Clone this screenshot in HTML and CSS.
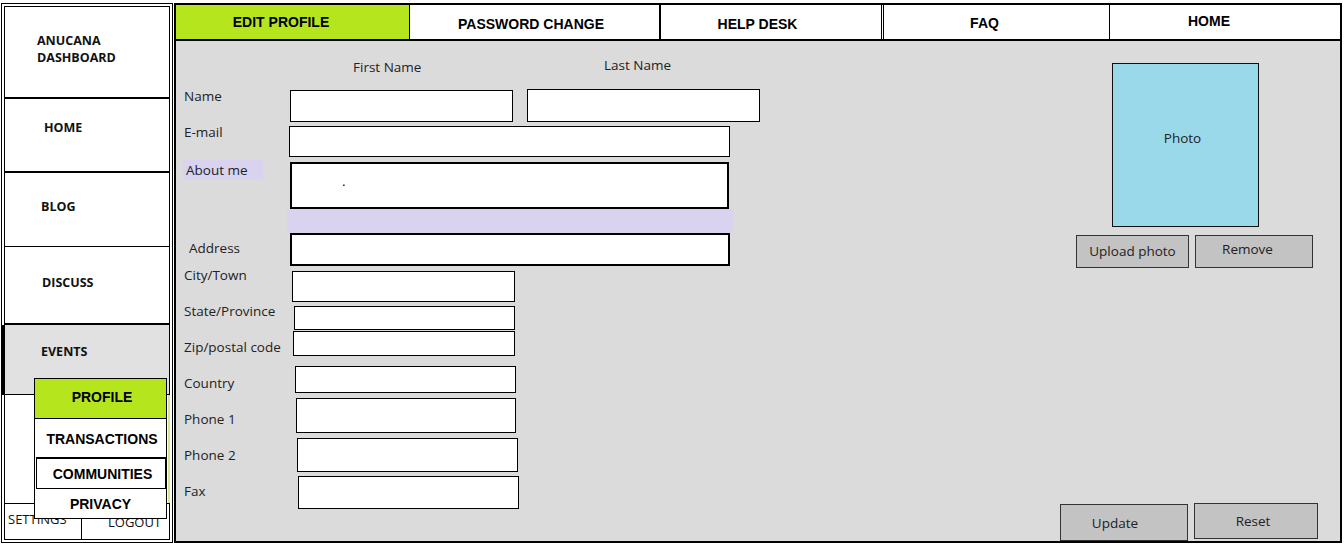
FILE: index.html
```html
<!DOCTYPE html>
<html lang="en">
<head>
<meta charset="utf-8">
<title>Anucana Dashboard - Edit Profile</title>
<link rel="stylesheet" href="styles.css">
</head>
<body>
<div class="page">
  <aside class="sidebar">
    <div class="si si-brand">ANUCANA<br>DASHBOARD</div>
    <div class="si si-home">HOME</div>
    <div class="si si-blog">BLOG</div>
    <div class="si si-discuss">DISCUSS</div>
    <div class="si si-events">EVENTS</div>
    <div class="si-blank"></div>
    <div class="si-foot">
      <div class="si-settings">SETTINGS</div>
      <div class="si-logout">LOGOUT</div>
    </div>
    <div class="popup">
      <div class="pop pop-profile">PROFILE</div>
      <div class="pop pop-trans">TRANSACTIONS</div>
      <div class="pop pop-comm">COMMUNITIES</div>
      <div class="pop pop-privacy">PRIVACY</div>
    </div>
  </aside>
  <main class="main">
    <nav class="tabs">
      <div class="tab tab--edit">EDIT PROFILE</div>
      <div class="tab tab--pass">PASSWORD CHANGE</div>
      <div class="tab tab--help">HELP DESK</div>
      <div class="tab tab--faq">FAQ</div>
      <div class="tab tab--home">HOME</div>
    </nav>
    <section class="content">
      <div class="form">
        <div class="form-head">
          <div class="head-first">First Name</div>
          <div class="head-last">Last Name</div>
        </div>
        <div class="form-body">
          <div class="labels">
            <div class="lbl lbl--name">Name</div>
            <div class="lbl">E-mail</div>
            <div class="lbl lbl--about">About me</div>
            <div class="lbl lbl--address">Address</div>
            <div class="lbl lbl--city">City/Town</div>
            <div class="lbl">State/Province</div>
            <div class="lbl">Zip/postal code</div>
            <div class="lbl">Country</div>
            <div class="lbl">Phone 1</div>
            <div class="lbl">Phone 2</div>
            <div class="lbl">Fax</div>
          </div>
          <div class="fields">
            <div class="name-row">
              <div class="field f-first"></div>
              <div class="field f-last"></div>
            </div>
            <div class="field f-email"></div>
            <div class="field f-about">.</div>
            <div class="f-band"></div>
            <div class="field f-address"></div>
            <div class="field f-city"></div>
            <div class="field f-state"></div>
            <div class="field f-zip"></div>
            <div class="field f-country"></div>
            <div class="field f-phone1"></div>
            <div class="field f-phone2"></div>
            <div class="field f-fax"></div>
          </div>
        </div>
      </div>
      <div class="side">
        <div class="photo">Photo</div>
        <div class="photo-actions">
          <div class="btn btn-upload">Upload photo</div>
          <div class="btn btn-remove">Remove</div>
        </div>
        <div class="form-actions">
          <div class="btn btn-update">Update</div>
          <div class="btn btn-reset">Reset</div>
        </div>
      </div>
    </section>
  </main>
</div>
</body>
</html>
```

FILE: styles.css
```css
* { box-sizing: border-box; }
html, body { margin: 0; }
body {
  width: 1344px;
  height: 545px;
  overflow: hidden;
  background: #fff;
  font-family: "Open Sans", "Noto Sans", sans-serif;
  color: #222;
}
.page {
  display: flex;
  gap: 1px;
  padding: 3px 0 0 1px;
}

/* ---------- Sidebar ---------- */
.sidebar {
  position: relative;
  width: 172px;
  height: 540px;
  border: 4px double #000;
  display: flex;
  flex-direction: column;
}
.si {
  font-weight: 700;
  font-size: 12.5px;
  line-height: 20px;
  color: #111;
}
.si-brand {
  height: 92px;
  border-bottom: 2px solid #000;
  padding: 25px 0 0 32px;
  line-height: 17px;
}
.si-home {
  height: 74px;
  border-bottom: 2px solid #000;
  padding: 19px 0 0 39px;
}
.si-blog {
  height: 74px;
  border-bottom: 1px solid #000;
  padding: 24px 0 0 36px;
}
.si-discuss {
  height: 78px;
  border-bottom: 2px solid #000;
  padding: 26px 0 0 37px;
}
.si-events {
  height: 70px;
  border-bottom: 1px solid #000;
  background: #e1e1e1;
  padding: 17px 0 0 36px;
  box-shadow: -4px 0 0 #000;
}
.si-blank { flex: 1; }
.si-foot {
  height: 36px;
  border-top: 1px solid #000;
  display: flex;
  font-size: 13px;
  line-height: 20px;
  color: #111;
}
.si-settings {
  width: 77px;
  border-right: 1px solid #000;
  padding: 5px 0 0 3px;
}
.si-logout {
  flex: 1;
  padding: 8px 0 0 26px;
}

/* popup menu over the sidebar */
.popup {
  position: absolute;
  left: 29px;
  top: 371px;
  width: 133px;
  border: 1px solid #000;
  background: #fff;
  font-family: "Liberation Sans", Arial, sans-serif;
  font-weight: 700;
  font-size: 14px;
  color: #000;
}
.popup::after {
  content: "";
  position: absolute;
  right: -4px;
  top: 16px;
  width: 2px;
  height: 108px;
  background: #d3e78f;
}
.pop {
  display: flex;
  align-items: center;
  justify-content: center;
  padding-left: 3px;
}
.pop-profile {
  height: 40px;
  background: #b5e61d;
  border-bottom: 1px solid #000;
  padding-bottom: 4px;
}
.pop-trans {
  height: 38px;
  padding-top: 2px;
}
.pop-comm {
  height: 32px;
  margin-left: 1px;
  border: 1px solid #000;
  border-top-width: 2px;
}
.pop-privacy {
  height: 29px;
  padding-left: 0;
}

/* ---------- Main ---------- */
.main {
  width: 1168px;
  height: 540px;
  border: 2px solid #000;
  display: flex;
  flex-direction: column;
}
.tabs {
  display: flex;
  height: 36px;
  border-bottom: 2px solid #000;
}
.tab {
  display: flex;
  align-items: center;
  justify-content: center;
  background: #fff;
  font-family: "Liberation Sans", Arial, sans-serif;
  font-weight: 700;
  font-size: 14px;
  color: #000;
}
.tab--edit {
  width: 234px;
  background: #b5e61d;
  border-right: 1px solid #000;
  padding: 0 23px 1px 0;
}
.tab--pass {
  width: 251px;
  border-right: 2px solid #000;
  padding: 3px 7px 0 0;
}
.tab--help {
  width: 223px;
  border-right: 3px double #000;
  padding: 3px 27px 0 0;
}
.tab--faq {
  width: 226px;
  border-right: 1px solid #000;
  padding: 1px 24px 0 0;
}
.tab--home {
  flex: 1;
  padding: 0 32px 3px 0;
}

.content {
  flex: 1;
  display: flex;
  background: #dbdbdb;
}
.form {
  flex: 1;
  padding-left: 8px;
  font-size: 13.5px;
  line-height: 20px;
  color: #222;
}
.form-head {
  display: flex;
  height: 36px;
  padding-top: 14px;
}
.head-first {
  width: 251px;
  margin: 2px 0 0 169px;
}
.form-body { display: flex; }
.labels {
  width: 103px;
  display: flex;
  flex-direction: column;
}
.lbl {
  height: 20px;
  margin-top: 16px;
  white-space: nowrap;
}
.lbl--name { margin-top: 9px; }
.lbl--about {
  margin-top: 18px;
  margin-left: -1px;
  width: 80px;
  padding-left: 3px;
  background: #d9d3ef;
}
.lbl--address { margin-top: 58px; padding-left: 5px; }
.lbl--city { margin-top: 7px; }

.fields {
  display: flex;
  flex-direction: column;
  align-items: flex-start;
}
.field {
  background: #fff;
  border: 1px solid #000;
}
.name-row { display: flex; align-items: flex-start; }
.f-first { margin: 13px 0 0 3px; width: 223px; height: 32px; }
.f-last { margin: 12px 0 0 14px; width: 233px; height: 33px; }
.f-email { margin: 4px 0 0 2px; width: 441px; height: 31px; }
.f-about {
  margin: 5px 0 0 3px;
  width: 439px;
  height: 47px;
  border-width: 2px;
  padding: 7px 0 0 50px;
  color: #000;
}
.f-band {
  width: 447px;
  height: 24px;
  background: #d9d3ef;
  border-radius: 0 2px 6px 0;
}
.f-address { margin-left: 3px; width: 440px; height: 33px; border-width: 2px; }
.f-city { margin: 5px 0 0 5px; width: 223px; height: 31px; }
.f-state { margin: 4px 0 0 7px; width: 221px; height: 24px; }
.f-zip { margin: 1px 0 0 6px; width: 222px; height: 25px; }
.f-country { margin: 10px 0 0 8px; width: 221px; height: 27px; }
.f-phone1 { margin: 5px 0 0 9px; width: 220px; height: 35px; }
.f-phone2 { margin: 5px 0 0 10px; width: 221px; height: 34px; }
.f-fax { margin: 4px 0 0 11px; width: 221px; height: 33px; }

/* ---------- Photo side ---------- */
.side {
  width: 258px;
  margin-right: 22px;
  display: flex;
  flex-direction: column;
  font-size: 13.5px;
  line-height: 20px;
  color: #222;
}
.photo {
  margin: 22px 0 0 52px;
  width: 147px;
  height: 164px;
  background: #99d9ea;
  border: 1px solid #111;
  display: flex;
  align-items: center;
  justify-content: center;
  padding: 0 6px 14px 0;
}
.photo-actions {
  display: flex;
  gap: 6px;
  margin: 8px 0 0 16px;
}
.btn {
  background: #c3c3c3;
  border: 1px solid #333;
  display: flex;
  align-items: center;
  justify-content: center;
}
.btn-upload { width: 113px; height: 33px; padding-bottom: 2px; }
.btn-remove { width: 118px; height: 33px; padding: 0 13px 6px 0; }
.form-actions {
  margin-top: auto;
  display: flex;
  align-items: flex-start;
  gap: 6px;
}
.btn-update { width: 128px; height: 37px; margin-top: 1px; padding-right: 18px; }
.btn-reset { width: 124px; height: 36px; padding: 0 6px 1px 0; }
```
